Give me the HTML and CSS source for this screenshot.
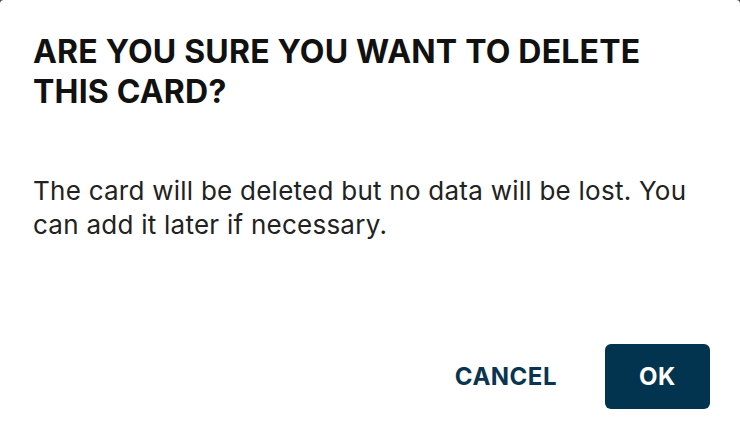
FILE: index.html
```html
<!DOCTYPE html>
<html lang="en">
<head>
<meta charset="utf-8">
<title>Delete card</title>
<link rel="stylesheet" href="styles.css">
</head>
<body>
<div class="dialog">
  <h2 class="dialog-title">ARE YOU SURE YOU WANT TO DELETE THIS CARD?</h2>
  <p class="dialog-text">The card will be deleted but no data will be lost. You can add it later if necessary.</p>
  <div class="dialog-actions">
    <button class="btn btn-text">CANCEL</button>
    <button class="btn btn-primary">OK</button>
  </div>
</div>
</body>
</html>
```
FILE: styles.css
```css
html, body {
  margin: 0;
  height: 100%;
}
body {
  background: #4a4a4a;
  font-family: Inter, "Noto Sans", sans-serif;
}
.dialog {
  box-sizing: border-box;
  height: 100%;
  background: #ffffff;
  border-radius: 4px 4px 0 0;
  padding: 32px 30px 29px 33px;
  display: flex;
  flex-direction: column;
}
.dialog-title {
  margin: 0;
  font-size: 32px;
  line-height: 40px;
  font-weight: 700;
  letter-spacing: 0.2px;
  color: #111111;
  max-width: 650px;
}
.dialog-text {
  margin: 62px 0 0;
  font-size: 26px;
  line-height: 34px;
  letter-spacing: 0.25px;
  color: #222222;
  max-width: 670px;
}
.dialog-actions {
  margin-top: auto;
  display: flex;
  justify-content: flex-end;
  align-items: center;
  gap: 48px;
}
.btn {
  font-family: inherit;
  font-weight: 700;
  font-size: 24px;
  letter-spacing: 0.5px;
  border: none;
  cursor: pointer;
}
.btn-text {
  background: transparent;
  color: #0a3550;
  padding: 0;
}
.btn-primary {
  background: #02344f;
  color: #ffffff;
  width: 105px;
  height: 65px;
  border-radius: 6px;
}
```
